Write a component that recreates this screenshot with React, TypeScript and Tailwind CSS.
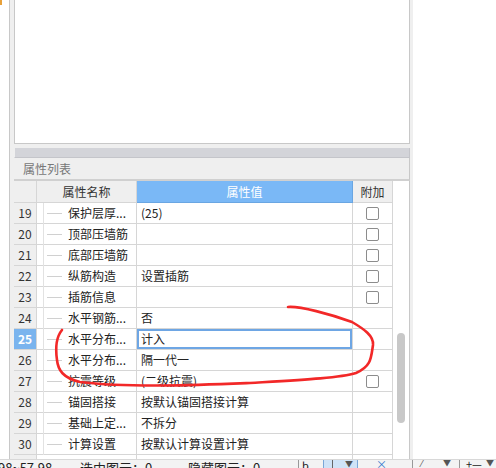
import React from 'react';

const font = { fontFamily: '"Noto Sans CJK SC", "Noto Sans", sans-serif' };

const rows = [
  { n: 19, name: '保护层厚...', value: '(25)', check: true },
  { n: 20, name: '顶部压墙筋', value: '', check: true },
  { n: 21, name: '底部压墙筋', value: '', check: true },
  { n: 22, name: '纵筋构造', value: '设置插筋', check: true },
  { n: 23, name: '插筋信息', value: '', check: true },
  { n: 24, name: '水平钢筋...', value: '否', check: false },
  { n: 25, name: '水平分布...', value: '计入', check: false, active: true },
  { n: 26, name: '水平分布...', value: '隔一代一', check: false },
  { n: 27, name: '抗震等级', value: '(二级抗震)', check: true },
  { n: 28, name: '锚固搭接', value: '按默认锚固搭接计算', check: false },
  { n: 29, name: '基础上定...', value: '不拆分', check: false },
  { n: 30, name: '计算设置', value: '按默认计算设置计算', check: false },
];

const Row = ({ r }: any) => (
  <div className="flex shrink-0 h-[21px] text-[12px] text-[#222]">
    <div
      className={`w-[23px] border-r border-b border-[#d6d6d6] flex items-center justify-center ${
        r.active ? 'bg-[#7ab4ee] text-white font-bold' : 'bg-[#efefef] text-[#333]'
      }`}
    >
      {r.n}
    </div>
    <div className="w-[100px] relative border-r border-b border-[#d6d6d6] flex items-center pl-[31px]">
      <div className="absolute left-[6px] top-0 bottom-[-1px] w-px bg-[#e2e2e2]" />
      <div className="absolute left-[10px] top-[10px] w-[15px] h-px bg-[#d0d0d0]" />
      <span className="truncate">{r.name}</span>
    </div>
    <div className="w-[216px] border-r border-b border-[#d6d6d6] flex items-center">
      {r.active ? (
        <div className="w-full h-full border-2 border-[#6ea6e4] flex items-center pl-[2px] -mr-px">{r.value}</div>
      ) : (
        <span className="pl-[4px]">{r.value}</span>
      )}
    </div>
    <div className="w-[40px] border-r border-b border-[#d6d6d6] flex items-center justify-center">
      {r.check && <div className="w-[13px] h-[13px] border border-[#8c8c8c] rounded-[2px] bg-white" />}
    </div>
  </div>
);

export default function App() {
  return (
    <div className="relative w-[496px] h-[468px] bg-white overflow-hidden" style={font}>
      <div className="absolute left-0 top-0 w-[2px] h-[5px] bg-[#e8a13a]" />
      <div className="flex h-[459px]">
        <div className="w-[9px]" />
        <div className="w-[404px] border-l border-[#c8c8c8] bg-[#efefef] pl-[4px] pr-[3px] flex flex-col">
          <div className="h-[144px] shrink-0 bg-white border-l border-r border-b border-[#c8c8c8]" />
          <div className="h-[4px] shrink-0" />
          <div className="h-[10px] shrink-0 bg-[#d3d4d9] border-b border-[#c4c5ca] border-r border-l border-l-[#efefef]" />
          <div className="h-[23px] shrink-0 flex items-center pl-[9px] text-[12px] text-[#777] border-r border-[#c8c8c8] border-b-2 border-b-[#d0d0d0]">
            属性列表
          </div>
          <div className="flex-1 flex bg-white border-r border-[#c8c8c8] overflow-hidden">
            <div className="flex flex-col">
              <div className="flex shrink-0 h-[22px] text-[12px]">
                <div className="w-[23px] bg-[#efefef] border-r border-b border-[#d6d6d6]" />
                <div className="w-[100px] bg-[#efefef] border-r border-b border-[#d6d6d6] flex items-center justify-center text-[#333]">
                  属性名称
                </div>
                <div className="w-[216px] bg-[#7ab8f6] border-r border-b border-[#6aa6e2] flex items-center justify-center text-white">
                  属性值
                </div>
                <div className="w-[40px] bg-[#efefef] border-r border-b border-[#d6d6d6] flex items-center justify-center text-[#333]">
                  附加
                </div>
              </div>
              {rows.map((r) => (
                <Row key={r.n} r={r} />
              ))}
              <div className="flex shrink-0 h-[21px]">
                <div className="w-[23px] bg-[#efefef] border-r border-[#d6d6d6]" />
                <div className="w-[100px] border-r border-[#d6d6d6]" />
                <div className="w-[216px] border-r border-[#d6d6d6]" />
                <div className="w-[40px] border-r border-[#d6d6d6]" />
              </div>
            </div>
            <div className="flex-1 relative">
              <div className="absolute left-[4px] top-[152px] w-[8px] h-[90px] rounded-full bg-[#c8c8c8]" />
            </div>
          </div>
        </div>
        <div className="flex-1" />
      </div>
      <div className="h-[9px] flex items-start border-t border-[#d8d8d8] bg-[#f3f3f3] text-[13px] leading-[15px] text-[#222] overflow-hidden">
        <span className="ml-[-2px] w-[82px] shrink-0">98~57.98</span>
        <span className="w-[108px] shrink-0">选中图元：0</span>
        <span className="w-[108px] shrink-0">隐藏图元：0</span>
        <div className="flex items-start h-full gap-0">
          <div className="w-px h-full bg-[#999] ml-[2px]" />
          <div className="w-[24px] text-[11px] leading-[10px] pl-[3px]">b</div>
          <div className="w-[35px] h-full bg-[#cfe3f7] border-x border-[#7aa7d8] flex items-center justify-end pr-[4px]">
            <div className="w-px h-full bg-[#666] mr-auto ml-[8px]" />
            <span className="text-[8px] leading-[6px] text-[#555]">▼</span>
          </div>
          <div className="w-[18px]" />
          <div className="w-[10px] text-[#3377cc] text-[11px] leading-[8px]">×</div>
          <div className="w-[20px] border-r border-[#999]" />
          <div className="w-px h-full bg-[#999] ml-[6px]" />
          <div className="w-[30px] text-[9px] leading-[8px] pl-[8px] text-[#555]">⁄</div>
          <span className="text-[8px] leading-[6px] text-[#555]">▼</span>
          <div className="w-px h-full bg-[#999] ml-[8px]" />
          <div className="w-[26px] text-[11px] leading-[8px] pl-[6px]">+—</div>
          <span className="text-[8px] leading-[6px] text-[#555]">▼</span>
          <div className="w-px h-full bg-[#999] ml-[8px]" />
          <div className="w-[10px] h-[6px] bg-[#555] ml-[6px]" />
        </div>
      </div>
      <svg className="absolute inset-0 pointer-events-none" width="496" height="468">
        <path
          d="M 288 307 C 300 306, 330 314, 352 322 C 364 329, 374 336, 373 345 C 371 357, 372 366, 356 373 C 340 378, 300 380, 250 383 C 200 385, 130 388, 80 382 C 63 378, 58 370, 57 360 C 55 346, 57 336, 62 330"
          fill="none"
          stroke="#f22828"
          strokeWidth="2.6"
          strokeLinecap="round"
        />
      </svg>
    </div>
  );
}
